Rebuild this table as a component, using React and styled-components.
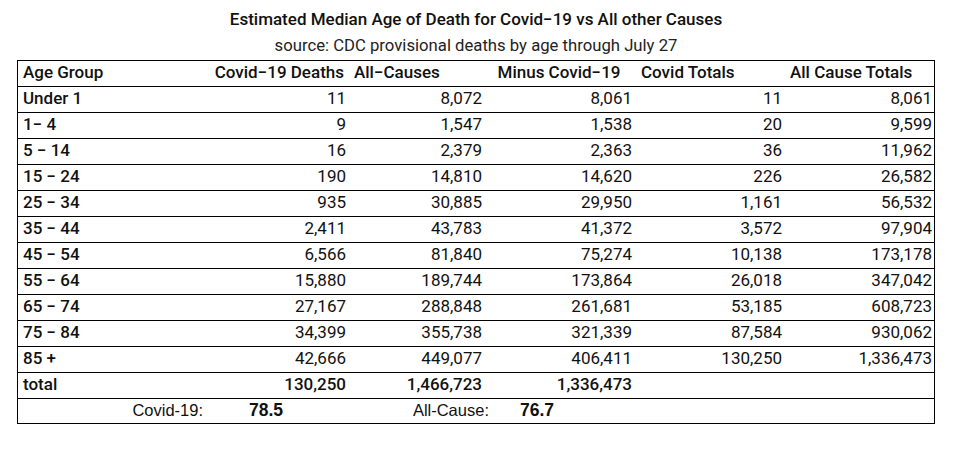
import React from "react";
import styled, { createGlobalStyle } from "styled-components";

const GlobalStyle = createGlobalStyle`
  html, body { margin: 0; padding: 0; background: #ffffff; }
  body { font-family: Roboto, "Liberation Sans", Arial, sans-serif; color: #111; }
`;

const Page = styled.div`
  width: 967px;
  height: 449px;
  background: #fff;
  padding: 8px 0 0 17px;
  box-sizing: border-box;
`;

const Heading = styled.div`
  width: 918px;
  display: flex;
  flex-direction: column;
  align-items: center;
`;

const Title = styled.div`
  font-size: 17px;
  font-weight: 500;
  line-height: 22px;
  height: 22px;
`;

const Subtitle = styled.div`
  font-size: 16.7px;
  font-weight: 400;
  line-height: 22px;
  height: 22px;
  margin-top: 5px;
  color: #222;
`;

const Table = styled.div`
  width: 918px;
  box-sizing: border-box;
  border: 1px solid #000;
  border-bottom: none;
  margin-top: 3px;
`;

const cols = "188px 142px 136px 150px 150px 150px";

const Row = styled.div`
  display: grid;
  grid-template-columns: ${cols};
  height: 26px;
  box-sizing: border-box;
  border-bottom: 1px solid #000;
  align-items: center;
  padding-bottom: 3px;
`;

const Cell = styled.div`
  font-size: 17px;
  font-weight: ${(p) => (p.$bold ? 500 : 400)};
  text-align: ${(p) => p.$align || "right"};
  padding: ${(p) => p.$pad || "0 2px 0 0"};
  white-space: nowrap;
  line-height: 20px;
`;

const FooterRow = styled.div`
  display: grid;
  grid-template-columns: 185px 120px 166px 100px;
  height: 25px;
  box-sizing: border-box;
  border-bottom: 1px solid #000;
  align-items: center;
  padding-bottom: 1px;
  font-family: "Liberation Sans", Arial, sans-serif;
`;

const FooterLabel = styled.div`
  text-align: right;
  font-weight: 400;
  font-size: 16.5px;
`;

const FooterValue = styled.div`
  text-align: left;
  font-weight: 700;
  font-size: 17.5px;
  padding-left: ${(p) => p.$indent}px;
`;

const MINUS = "\u2212";

const data = [
  ["Under 1", "11", "8,072", "8,061", "11", "8,061"],
  [`1${MINUS} 4`, "9", "1,547", "1,538", "20", "9,599"],
  [`5 ${MINUS} 14`, "16", "2,379", "2,363", "36", "11,962"],
  [`15 ${MINUS} 24`, "190", "14,810", "14,620", "226", "26,582"],
  [`25 ${MINUS} 34`, "935", "30,885", "29,950", "1,161", "56,532"],
  [`35 ${MINUS} 44`, "2,411", "43,783", "41,372", "3,572", "97,904"],
  [`45 ${MINUS} 54`, "6,566", "81,840", "75,274", "10,138", "173,178"],
  [`55 ${MINUS} 64`, "15,880", "189,744", "173,864", "26,018", "347,042"],
  [`65 ${MINUS} 74`, "27,167", "288,848", "261,681", "53,185", "608,723"],
  [`75 ${MINUS} 84`, "34,399", "355,738", "321,339", "87,584", "930,062"],
  ["85 +", "42,666", "449,077", "406,411", "130,250", "1,336,473"],
];

export default function App() {
  return (
    <Page>
      <GlobalStyle />
      <Heading>
        <Title>{`Estimated Median Age of Death for Covid${MINUS}19 vs All other Causes`}</Title>
        <Subtitle>source: CDC provisional deaths by age through July 27</Subtitle>
      </Heading>
      <Table>
        <Row>
          <Cell $bold $align="left" $pad="0 0 0 5px">Age Group</Cell>
          <Cell $bold $align="right" $pad="0 4px 0 0">{`Covid${MINUS}19 Deaths`}</Cell>
          <Cell $bold $align="left" $pad="0 0 0 6px">{`All${MINUS}Causes`}</Cell>
          <Cell $bold $align="center" $pad="0">{`Minus Covid${MINUS}19`}</Cell>
          <Cell $bold $align="left" $pad="0 0 0 7px">Covid Totals</Cell>
          <Cell $bold $align="left" $pad="0 0 0 6px">All Cause Totals</Cell>
        </Row>
        {data.map((r) => (
          <Row key={r[0]}>
            <Cell $bold $align="left" $pad="0 0 0 5px">{r[0]}</Cell>
            {r.slice(1).map((v, i) => (
              <Cell key={i}>{v}</Cell>
            ))}
          </Row>
        ))}
        <Row>
          <Cell $bold $align="left" $pad="0 0 0 5px">total</Cell>
          <Cell $bold>130,250</Cell>
          <Cell $bold>1,466,723</Cell>
          <Cell $bold>1,336,473</Cell>
          <Cell />
          <Cell />
        </Row>
        <FooterRow>
          <FooterLabel>Covid-19:</FooterLabel>
          <FooterValue $indent={46}>78.5</FooterValue>
          <FooterLabel>All-Cause:</FooterLabel>
          <FooterValue $indent={31}>76.7</FooterValue>
        </FooterRow>
      </Table>
    </Page>
  );
}
